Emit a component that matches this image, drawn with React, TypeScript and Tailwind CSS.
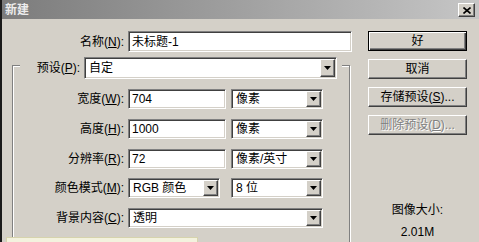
import type { ReactNode } from "react"

const sunken =
  "bg-white border border-t-[#808080] border-l-[#808080] border-b-white border-r-white shadow-[inset_1px_1px_0_#404040,inset_-1px_-1px_0_#d4d0c8]"
const raised =
  "bg-[#d4d0c8] border border-t-white border-l-white border-b-[#404040] border-r-[#404040] shadow-[inset_-1px_-1px_0_#808080]"

function Arrow() {
  return (
    <svg width="7" height="4" viewBox="0 0 7 4">
      <path d="M0 0h7L3.5 4z" fill="#000" />
    </svg>
  )
}

function Label({ text, keyChar, width }: { text: string; keyChar: string; width: string }) {
  return (
    <span className={`${width} shrink-0 text-right whitespace-nowrap`}>
      {text}(<u className="underline-offset-1">{keyChar}</u>):
    </span>
  )
}

function Field({ value, width }: { value: string; width: string }) {
  return (
    <div className={`${sunken} ${width} h-[20px] flex items-center pl-[3px] shrink-0`}>
      {value}
    </div>
  )
}

function Select({ value, width, height = "h-[20px]" }: { value: string; width: string; height?: string }) {
  return (
    <div className={`${sunken} ${width} ${height} flex items-stretch p-[1px] shrink-0`}>
      <span className="flex-1 flex items-center pl-[3px] whitespace-nowrap">{value}</span>
      <span className={`${raised} w-[15px] flex items-center justify-center`}>
        <Arrow />
      </span>
    </div>
  )
}

function Button({ children, primary, disabled }: { children: ReactNode; primary?: boolean; disabled?: boolean }) {
  const frame = primary
    ? "bg-[#d4d0c8] border border-black shadow-[inset_1px_1px_0_#fff,inset_-1px_-1px_0_#404040,inset_-2px_-2px_0_#808080]"
    : raised
  return (
    <div
      className={`${frame} h-[20px] flex items-center justify-center whitespace-nowrap ${
        disabled ? "text-[#808080] [text-shadow:1px_1px_0_#fff]" : "text-black"
      }`}
    >
      {children}
    </div>
  )
}

function Row({ children }: { children: ReactNode }) {
  return <div className="flex items-center h-[20px]">{children}</div>
}

export default function App() {
  return (
    <div className="relative w-[479px] h-[242px] overflow-hidden bg-[#d4d0c8] border-l-2 border-[#1a1a1a] font-['Liberation_Sans','Noto_Sans_CJK_SC',sans-serif] text-[12px] leading-none text-black">
      {/* title bar */}
      <div className="h-[19px] flex items-center justify-between pl-[3px] pr-[4px] bg-gradient-to-r from-[#7c7c7c] to-[#c6c6c6]">
        <span className="font-bold text-[#ececec]">新建</span>
        <span className={`${raised} mt-[1px] w-[17px] h-[14px] flex items-center justify-center`}>
          <svg width="8" height="7" viewBox="0 0 8 7">
            <path d="M0.5 0.5l7 6M7.5 0.5l-7 6" stroke="#000" strokeWidth="1.6" />
          </svg>
        </span>
      </div>

      <div className="flex pt-[12px]">
        {/* left column */}
        <div className="w-[350px] shrink-0">
          <div className="flex items-center h-[21px]">
            <Label text="名称" keyChar="N" width="w-[122px]" />
            <div className={`${sunken} ml-[4px] w-[224px] h-[21px] flex items-center pl-[3px]`}>未标题-1</div>
          </div>

          <div className="mt-[13px] ml-[10px] w-[338px] border border-[#808080] shadow-[inset_1px_1px_0_#fff,1px_1px_0_#fff] pb-[24px]">
            <div className="-mt-[9px] ml-[7px] w-[322px] pr-[5px] flex items-center bg-[#d4d0c8]">
              <Label text="预设" keyChar="P" width="w-[60px]" />
              <div className="ml-[4px]">
                <Select value="自定" width="w-[253px]" height="h-[22px]" />
              </div>
            </div>

            <div className="mt-[10px] flex flex-col gap-[9.75px]">
              <Row>
                <Label text="宽度" keyChar="W" width="w-[111px]" />
                <div className="ml-[4px] flex gap-[5px]">
                  <Field value="704" width="w-[98px]" />
                  <Select value="像素" width="w-[92px]" />
                </div>
              </Row>
              <Row>
                <Label text="高度" keyChar="H" width="w-[111px]" />
                <div className="ml-[4px] flex gap-[5px]">
                  <Field value="1000" width="w-[98px]" />
                  <Select value="像素" width="w-[92px]" />
                </div>
              </Row>
              <Row>
                <Label text="分辨率" keyChar="R" width="w-[111px]" />
                <div className="ml-[4px] flex gap-[5px]">
                  <Field value="72" width="w-[98px]" />
                  <Select value="像素/英寸" width="w-[92px]" />
                </div>
              </Row>
              <Row>
                <Label text="颜色模式" keyChar="M" width="w-[111px]" />
                <div className="ml-[4px] flex gap-[11px]">
                  <Select value="RGB 颜色" width="w-[92px]" />
                  <Select value="8 位" width="w-[92px]" />
                </div>
              </Row>
              <Row>
                <Label text="背景内容" keyChar="C" width="w-[111px]" />
                <div className="ml-[4px]">
                  <Select value="透明" width="w-[195px]" />
                </div>
              </Row>
            </div>
          </div>
        </div>

        {/* right column */}
        <div className="ml-[16px] w-[99px] flex flex-col">
          <div className="flex flex-col gap-[8px]">
            <Button primary>好</Button>
            <Button>取消</Button>
            <Button>
              存储预设(<u className="underline-offset-1">S</u>)...
            </Button>
            <Button disabled>
              删除预设(<u className="underline-offset-1">D</u>)...
            </Button>
          </div>
          <div className="mt-[69px] text-center">图像大小:</div>
          <div className="mt-[10px] text-center">2.01M</div>
        </div>
      </div>

      {/* tooltip peeking at the bottom */}
      <div className="absolute left-[4px] top-[237px] w-[192px] h-[20px] bg-[#f3f2de] border border-[#d6d3ad]" />
    </div>
  )
}
